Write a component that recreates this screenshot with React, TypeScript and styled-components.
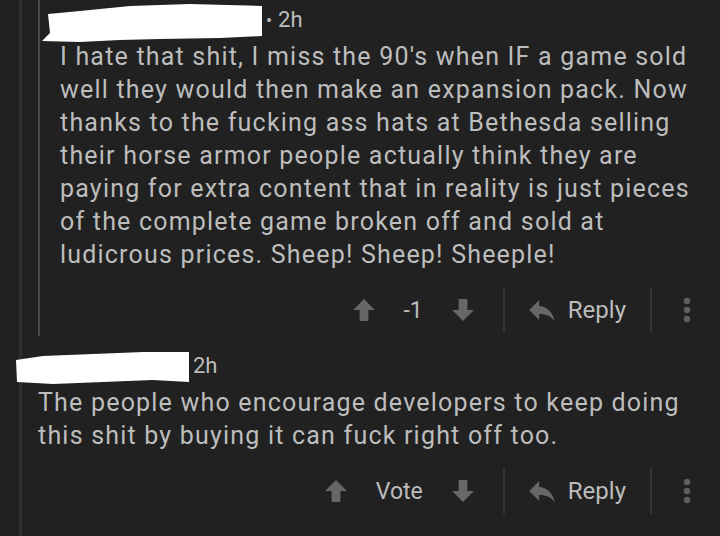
import React from "react";
import styled, { createGlobalStyle } from "styled-components";

const GlobalStyle = createGlobalStyle`
    html, body {
        margin: 0;
        padding: 0;
        background: #212121;
    }
    body {
        font-family: Roboto, "Noto Sans", "Liberation Sans", sans-serif;
        color: #bcbcbc;
    }
`;

interface CommentData {
    nameWidth: number;
    time: string;
    dot: boolean;
    body: string;
    score: string;
}

const nested: CommentData = {
    nameWidth: 222,
    time: "2h",
    dot: true,
    body: "I hate that shit, I miss the 90's when IF a game sold well they would then make an expansion pack. Now thanks to the fucking ass hats at Bethesda selling their horse armor people actually think they are paying for extra content that in reality is just pieces of the complete game broken off and sold at ludicrous prices. Sheep! Sheep! Sheeple!",
    score: "-1",
};

const reply: CommentData = {
    nameWidth: 176,
    time: "2h",
    dot: false,
    body: "The people who encourage developers to keep doing this shit by buying it can fuck right off too.",
    score: "Vote",
};

function UpArrow() {
    return (
        <svg width="24" height="24" viewBox="0 0 22 22">
            <path d="M11 1 L21 11 L15 11 L15 21 L7 21 L7 11 L1 11 Z" fill="currentColor" />
        </svg>
    );
}

function DownArrow() {
    return (
        <svg width="24" height="24" viewBox="0 0 22 22">
            <path d="M11 21 L21 11 L15 11 L15 1 L7 1 L7 11 L1 11 Z" fill="currentColor" />
        </svg>
    );
}

function ReplyIcon() {
    return (
        <svg width="34" height="34" viewBox="0 0 24 24">
            <path d="M10 9V5l-7 7 7 7v-4.1c5 0 8.5 1.6 11 5.1-1-5-4-10-11-11z" fill="currentColor" />
        </svg>
    );
}

function MoreIcon() {
    return (
        <svg width="8" height="26" viewBox="0 0 8 26">
            <circle cx="4" cy="4" r="3.2" fill="currentColor" />
            <circle cx="4" cy="13" r="3.2" fill="currentColor" />
            <circle cx="4" cy="22" r="3.2" fill="currentColor" />
        </svg>
    );
}

// redacted username, drawn as an uneven white scribble
function NameBlot({ width, variant }: { width: number; variant: number }) {
    const h = 40;
    const d =
        variant === 0
            ? `M2 39 L10 31 L8 12 L40 9 L90 4 L150 2 L${width} 4 L${width} 34 L180 36 L120 37 L80 38 L40 40 Z`
            : `M3 12 L30 8 L80 6 L130 4 L${width} 4 L${width} 34 L140 32 L90 34 L40 36 L4 34 Z`;
    return (
        <svg width={width + 2} height={h} viewBox={`0 0 ${width + 2} ${h}`}>
            <path d={d} fill="#ffffff" />
        </svg>
    );
}

function Comment({ data, blot, compactTop }: { data: CommentData; blot: number; compactTop?: boolean }) {
    return (
        <CommentBox $compactTop={compactTop}>
            <Header $shift={blot === 0 ? -20 : -25}>
                <NameBlot width={data.nameWidth} variant={blot} />
                <Time>
                    {data.dot && <Dot>•</Dot>}
                    {data.time}
                </Time>
            </Header>
            <Body>{data.body}</Body>
            <Actions>
                <VoteGroup>
                    <IconSlot><UpArrow /></IconSlot>
                    <Score>{data.score}</Score>
                    <IconSlot><DownArrow /></IconSlot>
                </VoteGroup>
                <Divider />
                <ReplyButton>
                    <IconSlot><ReplyIcon /></IconSlot>
                    <ReplyLabel>Reply</ReplyLabel>
                </ReplyButton>
                <Divider />
                <MoreButton><MoreIcon /></MoreButton>
            </Actions>
        </CommentBox>
    );
}

export default function App() {
    return (
        <>
            <GlobalStyle />
            <Page>
                <Thread $depth={1}>
                    <Thread $depth={2}>
                        <Comment data={nested} blot={0} />
                    </Thread>
                    <Comment data={reply} blot={1} compactTop />
                </Thread>
            </Page>
        </>
    );
}

const Page = styled.div`
    width: 720px;
    height: 536px;
    overflow: hidden;
    background: #212121;
    padding-left: 19px;
    box-sizing: border-box;
`;

const Thread = styled.div<{ $depth: number }>`
    border-left: ${({ $depth }) => ($depth === 1 ? "3px solid #2f2f2f" : "2px solid #4a4a4a")};
    padding-left: ${({ $depth }) => ($depth === 1 ? "16px" : "20px")};
    ${({ $depth }) => ($depth === 1 ? "min-height: 100%; box-sizing: border-box;" : "padding-bottom: 2px;")}
`;

const CommentBox = styled.div<{ $compactTop?: boolean }>`
    display: flex;
    flex-direction: column;
    padding-top: ${({ $compactTop }) => ($compactTop ? "14px" : "4px")};
    padding-right: 14px;
`;

const Header = styled.div<{ $shift: number }>`
    display: flex;
    align-items: center;
    height: 36px;
    margin-left: ${({ $shift }) => $shift}px;
`;

const Time = styled.span`
    font-size: 22px;
    color: #bcbcbc;
    margin-left: 2px;
    margin-top: -6px;
`;

const Dot = styled.span`
    margin-right: 6px;
    font-size: 18px;
`;

const Body = styled.p`
    margin: 0;
    font-size: 25px;
    line-height: 33px;
    letter-spacing: 1.2px;
    color: #bdbdbd;
`;

const Actions = styled.div`
    display: flex;
    align-items: center;
    justify-content: flex-end;
    height: 48px;
    margin-top: 15px;
    padding-right: 15px;
    color: #686868;
`;

const VoteGroup = styled.div`
    display: flex;
    align-items: center;
    gap: 28px;
    margin-right: 28px;
`;

const IconSlot = styled.span`
    display: flex;
    align-items: center;
    color: #676767;
`;

const Score = styled.span`
    font-size: 23px;
    color: #bcbcbc;
`;

const Divider = styled.span`
    width: 2px;
    height: 46px;
    background: #353535;
`;

const ReplyButton = styled.div`
    display: flex;
    align-items: center;
    gap: 9px;
    margin: 0 24px 0 20px;
`;

const ReplyLabel = styled.span`
    font-size: 24px;
    color: #bcbcbc;
`;

const MoreButton = styled.div`
    display: flex;
    align-items: center;
    margin-left: 31px;
    color: #5e5e5e;
`;
